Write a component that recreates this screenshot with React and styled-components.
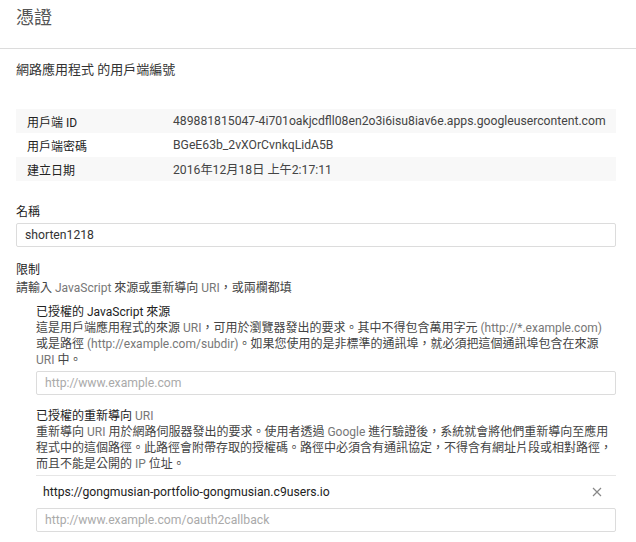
import React from "react";
import styled, { createGlobalStyle } from "styled-components";

const GlobalStyle = createGlobalStyle`
  body {
    margin: 0;
    background: #fff;
    font-family: Roboto, "Noto Sans CJK TC", sans-serif;
    color: #333;
    font-size: 12px;
  }
`;

const Page = styled.div`
  width: 636px;
`;

const Header = styled.div`
  height: 49px;
  box-sizing: border-box;
  padding: 6px 0 0 16px;
  border-bottom: 1px solid #dcdcdc;
`;

const Title = styled.h1`
  margin: 0;
  font-size: 18px;
  line-height: 24px;
  font-weight: 400;
  color: #555;
`;

const Content = styled.div`
  padding: 0 20px 0 16px;
`;

const Subtitle = styled.div`
  margin-top: 13px;
  line-height: 16px;
  font-size: 13px;
  color: #333;
`;

const InfoTable = styled.div`
  margin-top: 31px;
  display: flex;
  flex-direction: column;
`;

const InfoRow = styled.div`
  display: flex;
  align-items: center;
  height: 24px;
  background: ${(p) => (p.$shaded ? "#f8f8f8" : "#fff")};
`;

const InfoLabel = styled.div`
  width: 146px;
  padding-left: 11px;
  color: #222;
`;

const InfoValue = styled.div`
  font-size: 12.2px;
  color: #444;
  white-space: nowrap;
`;

const FieldLabel = styled.div`
  margin-top: ${(p) => p.$top || 0}px;
  line-height: 16px;
  color: #222;
`;

const Desc = styled.div`
  margin-top: ${(p) => p.$top || 0}px;
  line-height: 16px;
  color: #444;
`;

const Line = styled.span`
  display: block;
  white-space: nowrap;
`;

const Latin = styled.span`
  color: #777;
`;

const TextInput = styled.input`
  display: block;
  box-sizing: border-box;
  width: 100%;
  height: 24px;
  margin-top: ${(p) => p.$top ?? 3}px;
  padding: 0 8px;
  border: 1px solid #dcdcdc;
  border-radius: 2px;
  font-family: Roboto, "Noto Sans CJK TC", sans-serif;
  font-size: 12.2px;
  color: #333;
  outline: none;
  &::placeholder {
    color: #aaa;
  }
`;

const SubSection = styled.div`
  padding-left: 20px;
  margin-top: ${(p) => p.$top || 0}px;
`;

const UriList = styled.div`
  margin-top: 3px;
  border-top: 1px solid #e6e6e6;
`;

const UriRow = styled.div`
  display: flex;
  align-items: center;
  justify-content: space-between;
  height: 32px;
  padding: 0 14px 0 7px;
  font-size: 12.2px;
  color: #222;
`;

const RemoveButton = styled.button`
  border: 0;
  background: none;
  padding: 0;
  display: flex;
  cursor: pointer;
`;

const CloseIcon = () => (
  <svg width="10" height="10" viewBox="0 0 10 10">
    <path d="M1 1 L9 9 M9 1 L1 9" stroke="#888" strokeWidth="1.2" />
  </svg>
);

export default function App() {
  return (
    <Page>
      <GlobalStyle />
      <Header>
        <Title>憑證</Title>
      </Header>
      <Content>
        <Subtitle>網路應用程式 的用戶端編號</Subtitle>
        <InfoTable>
          <InfoRow $shaded>
            <InfoLabel>用戶端 ID</InfoLabel>
            <InfoValue>489881815047-4i701oakjcdfll08en2o3i6isu8iav6e.apps.googleusercontent.com</InfoValue>
          </InfoRow>
          <InfoRow>
            <InfoLabel>用戶端密碼</InfoLabel>
            <InfoValue>BGeE63b_2vXOrCvnkqLidA5B</InfoValue>
          </InfoRow>
          <InfoRow $shaded>
            <InfoLabel>建立日期</InfoLabel>
            <InfoValue>2016年12月18日 上午2:17:11</InfoValue>
          </InfoRow>
        </InfoTable>

        <FieldLabel $top={23}>名稱</FieldLabel>
        <TextInput defaultValue="shorten1218" />

        <FieldLabel $top={15}>限制</FieldLabel>
        <Desc $top={2}>
          請輸入 <Latin>JavaScript</Latin> 來源或重新導向 <Latin>URI</Latin>，或兩欄都填
        </Desc>

        <SubSection $top={8}>
          <FieldLabel>已授權的 JavaScript 來源</FieldLabel>
          <Desc>
            <Line>
              這是用戶端應用程式的來源 <Latin>URI</Latin>，可用於瀏覽器發出的要求。其中不得包含萬用字元{" "}
              <Latin>(http://*.example.com)</Latin>
            </Line>
            <Line>
              或是路徑 <Latin>(http://example.com/subdir)</Latin>。如果您使用的是非標準的通訊埠，就必須把這個通訊埠包含在來源
            </Line>
            <Line>
              <Latin>URI</Latin> 中。
            </Line>
          </Desc>
          <TextInput placeholder="http://www.example.com" />
        </SubSection>

        <SubSection $top={13}>
          <FieldLabel>
            已授權的重新導向 <Latin>URI</Latin>
          </FieldLabel>
          <Desc>
            <Line>
              重新導向 <Latin>URI</Latin> 用於網路伺服器發出的要求。使用者透過 <Latin>Google</Latin>{" "}
              進行驗證後，系統就會將他們重新導向至應用
            </Line>
            <Line>
              程式中的這個路徑。此路徑會附帶存取的授權碼。路徑中必須含有通訊協定，不得含有網址片段或相對路徑，
            </Line>
            <Line>
              而且不能是公開的 <Latin>IP</Latin> 位址。
            </Line>
          </Desc>
          <UriList>
            <UriRow>
              <span>https://gongmusian-portfolio-gongmusian.c9users.io</span>
              <RemoveButton aria-label="移除">
                <CloseIcon />
              </RemoveButton>
            </UriRow>
          </UriList>
          <TextInput $top={0} placeholder="http://www.example.com/oauth2callback" />
        </SubSection>
      </Content>
    </Page>
  );
}
